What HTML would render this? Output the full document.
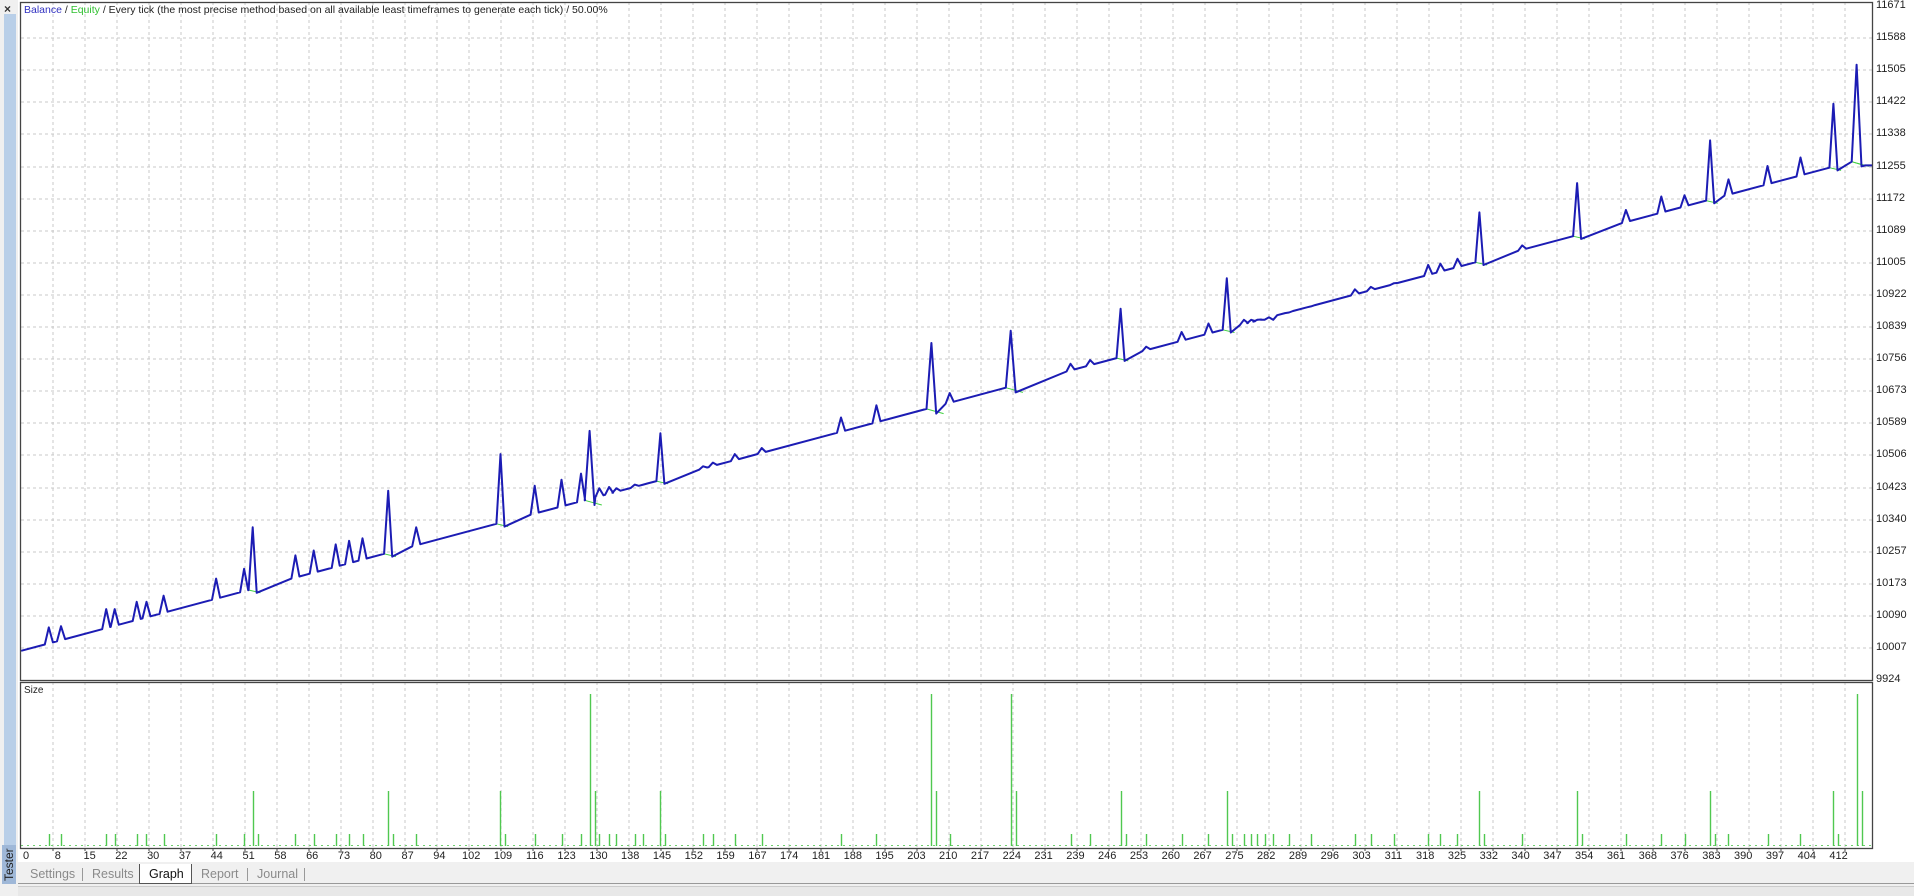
<!DOCTYPE html>
<html><head><meta charset="utf-8"><style>
html,body{margin:0;padding:0;width:1914px;height:896px;overflow:hidden;background:#f0f0f0;font-family:"Liberation Sans",sans-serif;}
#root{position:relative;width:1914px;height:896px;}
.lbl{position:absolute;font-size:11px;color:#222;white-space:nowrap;}
.tab{position:absolute;top:865px;height:18px;font-size:12.5px;color:#8a8a8a;line-height:18px;}
</style></head><body><div id="root">
<div style="position:absolute;left:0;top:0;width:18px;height:884px;background:#f0f0f0"></div>
<div style="position:absolute;left:4px;top:4px;font-size:12px;font-weight:bold;color:#333;line-height:10px">×</div>
<div style="position:absolute;left:4px;top:14px;width:12px;height:868px;background:#b9cfe8"></div>
<div style="position:absolute;left:2px;top:884px;transform:rotate(-90deg);transform-origin:0 0;font-size:12px;color:#222;background:#9fb8d8;padding:0 3px;line-height:14px">Tester</div>
<div style="position:absolute;left:18px;top:0;width:1896px;height:862px;background:#fff"></div>
<svg id="g" width="1914" height="896" style="position:absolute;left:0;top:0"></svg>
<div class="lbl" style="left:24px;top:4px;font-size:10.5px"><span style="color:#3030c0">Balance</span> / <span style="color:#30c030">Equity</span> / Every tick (the most precise method based on all available least timeframes to generate each tick) / 50.00%</div>
<div class="lbl" style="left:24px;top:685px;font-size:10px">Size</div>
<div id="labels"></div>
<div style="position:absolute;left:18px;top:883px;width:1896px;height:1px;background:#999"></div>
<div style="position:absolute;left:18px;top:886px;width:1896px;height:10px;background:#e8e8e8;border-top:1px solid #ccc"></div>
<div class="tab" style="left:30px">Settings</div>
<div style="position:absolute;left:82px;top:868px;width:1px;height:13px;background:#999"></div>
<div class="tab" style="left:92px">Results</div>
<div style="position:absolute;left:139px;top:864px;width:51px;height:19px;background:#fff;border:1px solid #555;border-top:none"></div>
<div class="tab" style="left:149px;color:#111">Graph</div>
<div class="tab" style="left:201px">Report</div>
<div style="position:absolute;left:247px;top:868px;width:1px;height:13px;background:#999"></div>
<div class="tab" style="left:257px">Journal</div>
<div style="position:absolute;left:304px;top:868px;width:1px;height:13px;background:#999"></div>
</div>
<script>
(function(){
var s='',L=21,R=1872,T=2,B1=680,T2=682,B2=848,S=1914/1568;
for(var x=53;x<R;x+=32){s+='<line x1="'+x+'" y1="'+T+'" x2="'+x+'" y2="'+B1+'" stroke="#c8c8c8" stroke-dasharray="3,3"/>';s+='<line x1="'+x+'" y1="'+T2+'" x2="'+x+'" y2="'+B2+'" stroke="#c8c8c8" stroke-dasharray="3,3"/>';}
var vals=[11671,11588,11505,11422,11338,11255,11172,11089,11005,10922,10839,10756,10673,10589,10506,10423,10340,10257,10173,10090,10007,9924];
var lh='';
for(var k=0;k<22;k++){var y=Math.round(6+k*32.1);if(k>0&&k<21)s+='<line x1="'+L+'" y1="'+y+'" x2="'+R+'" y2="'+y+'" stroke="#c8c8c8" stroke-dasharray="3,3"/>';
lh+='<div class="lbl" style="left:1876px;top:'+(y-7)+'px">'+vals[k]+'</div>';}
var xl=[0,8,15,22,30,37,44,51,58,66,73,80,87,94,102,109,116,123,130,138,145,152,159,167,174,181,188,195,203,210,217,224,231,239,246,253,260,267,275,282,289,296,303,311,318,325,332,340,347,354,361,368,376,383,390,397,404,412];
for(var k=0;k<xl.length;k++){lh+='<div class="lbl" style="left:'+(26+k*31.8)+'px;top:850px;transform:translateX(-50%)">'+xl[k]+'</div>';}
document.getElementById('labels').innerHTML=lh;
function base(x){return 533-0.2672*(x-18);}
function P(x,y){return (x*S).toFixed(1)+','+(y*S).toFixed(1);}
var sp=[[40,514],[50,513],[87,499],[94,499],[112,493],[120,493],[134,488],[177,474],[200,466],[207,432,1],[242,455],[257,451],[275,446],[286,443],[297,441],[318,402,1],[341,432],[410,372,1],[438,398],[460,393],[476,388],[483,353,2],[491,400],[499,399],[505,400],[520,397],[527,397],[541,355,1],[576,382],[584,379],[602,372],[624,367],[689,342],[718,332],[763,281,2],[778,322],[828,271,2],[877,298],[893,295],[918,253,1],[939,284],[968,272],[990,265],[1005,228,1],[1019,262],[1025,262],[1030,262],[1036,262],[1043,262],[1056,256],[1074,251],[1110,237],[1123,235],[1142,232],[1170,217],[1180,216],[1194,212],[1212,174,1],[1247,201],[1292,150,1],[1332,172],[1361,161],[1380,160],[1401,115,1],[1416,147],[1448,136],[1475,129],[1502,85,1],[1521,53,2]];
var p=[P(17.3,base(17.3))],g='';
for(var i=0;i<sp.length;i++){var a=sp[i],x=a[0],big=a[2]||0,w=big==2?4:3.3;
var b0=base(x-w);p.push(P(x-w,b0));p.push(P(x,a[1]));
if(big){var d=big==2?6:4;p.push(P(x+w,base(x+w)+d));g+='<polyline points="'+P(x-w,b0)+' '+P(x+w+(big==2?6:3),base(x+w)+d)+'" fill="none" stroke="#40d040" stroke-width="1"/>';}
else p.push(P(x+w,base(x+w)));}
var ye=base(1528)+6;p.push(P(1528,ye));p.push((R)+','+(ye*S).toFixed(1));
g+='<polyline points="'+P(1517,base(1517))+' '+P(1527,ye)+' '+R+','+(ye*S).toFixed(1)+'" fill="none" stroke="#40d040"/>';
s+=g+'<polyline points="'+p.join(' ')+'" fill="none" stroke="#1c1cb4" stroke-width="2" stroke-linejoin="round"/>';
s+='<line x1="'+L+'" y1="845.5" x2="'+R+'" y2="845.5" stroke="#70d070" stroke-dasharray="2,4"/>';
for(var i=0;i<sp.length;i++){var a=sp[i],bx=Math.round(a[0]*S)+0.5,big=a[2]||0,ty=big==2?694:(big==1?791:834);
s+='<line x1="'+bx+'" y1="'+ty+'" x2="'+bx+'" y2="846" stroke="#50c850" stroke-width="1.4"/>';
if(big==2)s+='<line x1="'+(bx+5)+'" y1="791" x2="'+(bx+5)+'" y2="846" stroke="#50c850" stroke-width="1.4"/>';
if(big==1)s+='<line x1="'+(bx+5)+'" y1="834" x2="'+(bx+5)+'" y2="846" stroke="#50c850" stroke-width="1.4"/>';}
s+='<rect x="'+(L-0.5)+'" y="'+(T+0.5)+'" width="'+(R-L+1)+'" height="'+(B1-T)+'" fill="none" stroke="#444" stroke-width="1.3"/>';
s+='<rect x="'+(L-0.5)+'" y="'+(T2+0.5)+'" width="'+(R-L+1)+'" height="'+(B2-T2)+'" fill="none" stroke="#444" stroke-width="1.3"/>';
for(var x=53;x<R;x+=32)s+='<line x1="'+x+'" y1="'+B2+'" x2="'+x+'" y2="'+(B2+3)+'" stroke="#444"/>';
document.getElementById('g').innerHTML=s;
})();
</script>
</body></html>
